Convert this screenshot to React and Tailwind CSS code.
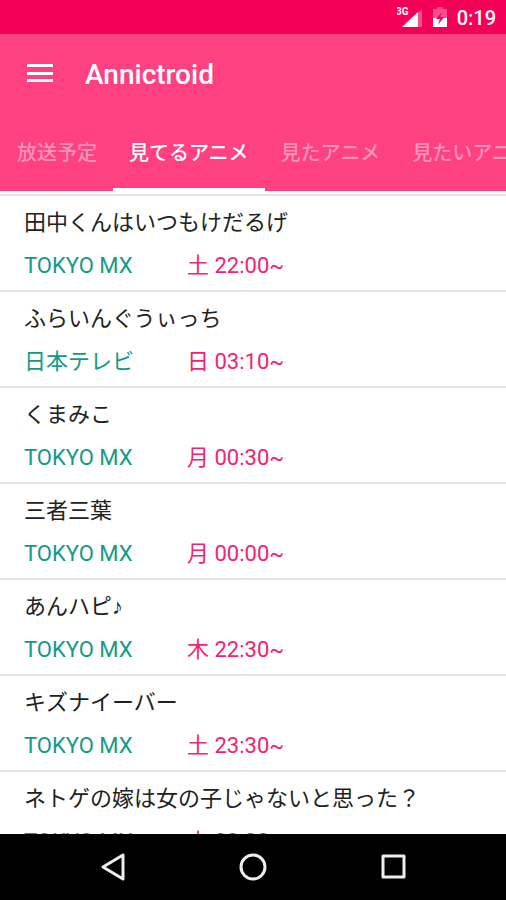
import React from 'react';

const tabs = [
  { label: '放送予定', active: false },
  { label: '見てるアニメ', active: true },
  { label: '見たアニメ', active: false },
  { label: '見たいアニメ', active: false }
];

const shows = [
  { title: '田中くんはいつもけだるげ', channel: 'TOKYO MX', time: '土 22:00~' },
  { title: 'ふらいんぐうぃっち', channel: '日本テレビ', time: '日 03:10~' },
  { title: 'くまみこ', channel: 'TOKYO MX', time: '月 00:30~' },
  { title: '三者三葉', channel: 'TOKYO MX', time: '月 00:00~' },
  { title: 'あんハピ♪', channel: 'TOKYO MX', time: '木 22:30~' },
  { title: 'キズナイーバー', channel: 'TOKYO MX', time: '土 23:30~' },
  { title: 'ネトゲの嫁は女の子じゃないと思った？', channel: 'TOKYO MX', time: '木 23:30~' }
];

function StatusBar() {
  return (
    <div className="flex h-[34px] shrink-0 items-center justify-end bg-[#f50057] pt-0.5 pr-[10px] text-white">
      <svg className="h-6 w-[30px]" viewBox="0 0 30 24" fill="currentColor" aria-hidden="true">
        <path d="M25 3v18h-4V7z" opacity=".3" />
        <path d="M21 6v15H5z" />
        <text x="-1" y="9" fontSize="10" fontWeight="700" fontFamily="Roboto, sans-serif">3G</text>
      </svg>
      <svg className="ml-[6px] h-6 w-4" viewBox="0 0 16 24" aria-hidden="true">
        <path d="M4 1h6v2h4v9H0V3h4z" fill="#fff" opacity=".3" />
        <path d="M0 12h14v9H0z" fill="#fff" />
        <path d="M9 6 3 13h4l-2 6 6-8H7z" fill="#f50057" />
      </svg>
      <span className="ml-2 text-[20px] leading-6 font-medium">0:19</span>
    </div>
  );
}

function AppBar() {
  return (
    <header className="shrink-0 bg-[#ff4081] text-white">
      <div className="flex h-20 items-center pl-[26px]">
        <button type="button" aria-label="Menu" className="h-5 w-7">
          <svg className="h-5 w-7" viewBox="0 0 28 20" fill="currentColor">
            <path d="M1 0h26v3H1zM1 8h26v3H1zM1 15h26v3H1z" />
          </svg>
        </button>
        <h1 className="ml-[31px] pt-0.5 text-[28px] leading-8 font-medium">Annictroid</h1>
      </div>
      <nav className="flex h-[77px] overflow-hidden pl-px">
        {tabs.map((tab) => (
          <button
            key={tab.label}
            type="button"
            className={`shrink-0 border-b-3 px-4 pt-1 text-[20px] leading-6 font-medium ${
              tab.active ? 'border-white text-white' : 'border-transparent text-white/45'
            }`}
          >
            {tab.label}
          </button>
        ))}
      </nav>
    </header>
  );
}

function ShowList() {
  return (
    <main className="min-h-0 flex-1 overflow-hidden pt-[3px]">
      <ul>
        {shows.map((show) => (
          <li key={show.title} className="h-24 border-t-2 border-[#e4e4e4] pt-[9px] pl-6">
            <p className="text-[22px] leading-9 whitespace-nowrap text-[#212121]">{show.title}</p>
            <div className="mt-2 flex text-[22px] leading-[34px]">
              <span className="w-[163px] text-[#129a85]">{show.channel}</span>
              <span className="text-[#f5226d]">{show.time}</span>
            </div>
          </li>
        ))}
      </ul>
    </main>
  );
}

function NavBar() {
  return (
    <footer className="flex h-[66px] shrink-0 items-center justify-center gap-[112px] bg-black text-[#eee]">
      <button type="button" aria-label="Back">
        <svg className="size-7" viewBox="0 0 28 28" fill="none" stroke="currentColor" strokeWidth="3" strokeLinejoin="round">
          <path d="M24 2v24L4 14z" />
        </svg>
      </button>
      <button type="button" aria-label="Home">
        <svg className="size-7" viewBox="0 0 28 28" fill="none" stroke="currentColor" strokeWidth="3">
          <circle cx="14" cy="14" r="12" />
        </svg>
      </button>
      <button type="button" aria-label="Recent apps">
        <svg className="size-7" viewBox="0 0 28 28" fill="none" stroke="currentColor" strokeWidth="3" strokeLinejoin="round">
          <path d="M4 3h21v21H4z" />
        </svg>
      </button>
    </footer>
  );
}

function App() {
  return (
    <div className="flex h-screen flex-col bg-white font-[Roboto,'Liberation_Sans','Noto_Sans_CJK_JP',sans-serif]">
      <StatusBar />
      <AppBar />
      <ShowList />
      <NavBar />
    </div>
  );
}

export default App;
